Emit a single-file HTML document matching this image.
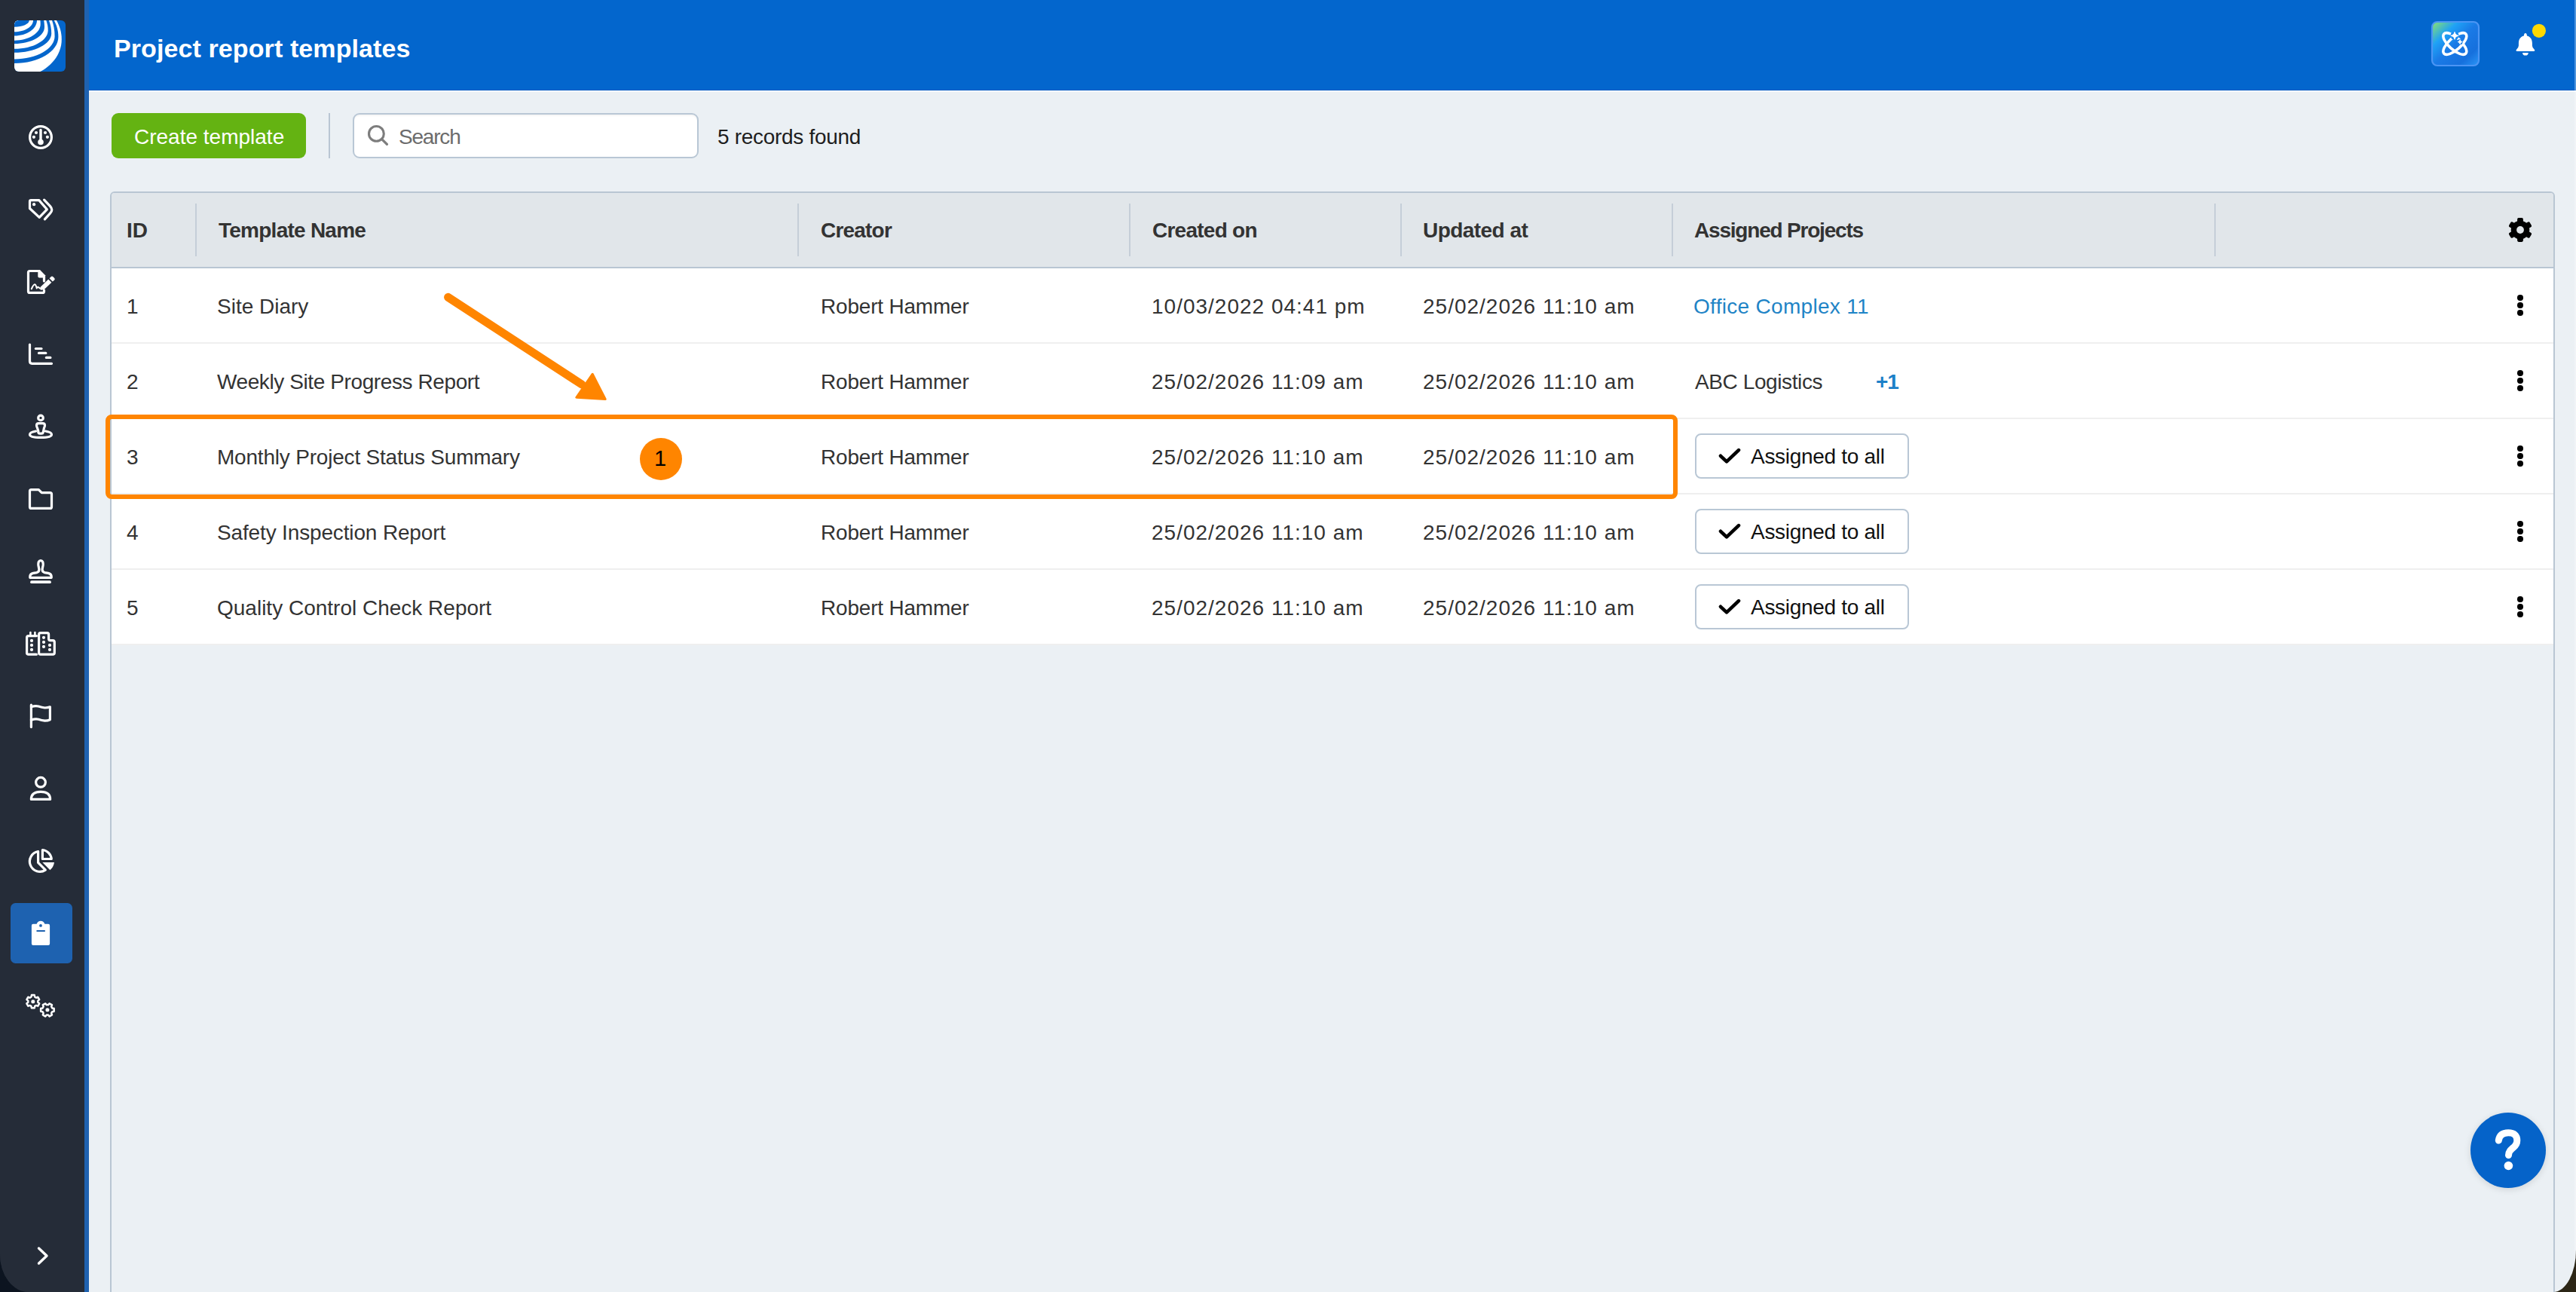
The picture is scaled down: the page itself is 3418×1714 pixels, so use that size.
<!DOCTYPE html>
<html><head><meta charset="utf-8">
<style>
*{box-sizing:border-box;margin:0;padding:0}
html,body{width:3418px;height:1714px;overflow:hidden;background:linear-gradient(90deg,#0c1420 0%,#1a1c1c 50%,#2c2616 100%)}
body{font-family:"Liberation Sans",sans-serif;position:relative}
.win{position:absolute;left:0;top:0;width:3418px;height:1714px;background:linear-gradient(90deg,#252c38 0,#252c38 112px,#ebf0f4 112px);border-radius:0 0 30px 38px / 0 0 56px 50px;overflow:hidden}
.abs{position:absolute;white-space:nowrap}
.side{position:absolute;left:0;top:0;width:112px;height:1714px;background:#252c38}
.strip{position:absolute;left:112px;top:0;width:6px;height:1714px;background:#1f62b0}
.hdr{position:absolute;left:118px;top:0;width:3300px;height:120px;background:#0366cd}
.title{position:absolute;left:151px;top:39px;font-size:34px;font-weight:700;color:#fff;line-height:50px;white-space:nowrap;letter-spacing:0.1px}
.btn{position:absolute;left:148px;top:150px;width:258px;height:60px;background:#64b312;border-radius:9px}
.vdiv{position:absolute;left:436px;top:150px;width:2px;height:60px;background:#b9c6d3}
.search{position:absolute;left:468px;top:150px;width:459px;height:60px;background:#fff;border:2px solid #b9c7d5;border-radius:9px;box-shadow:inset 0 2px 2px rgba(0,0,0,0.04)}
.table{position:absolute;left:146px;top:254px;width:3244px;height:1600px;border:2px solid #b9c6d3;border-radius:6px;background:#ebf0f4}
.thead{position:absolute;left:148px;top:256px;width:3240px;height:100px;background:#e1e6ea;border-bottom:2px solid #b9c6d3;border-radius:4px 4px 0 0}
.row{position:absolute;left:148px;width:3240px;height:100px;background:#fff;border-bottom:2px solid #efefef}
.t{position:absolute;font-size:28px;color:#333;line-height:40px;white-space:nowrap}
.th{position:absolute;font-size:28px;font-weight:700;color:#333;line-height:40px;white-space:nowrap}
.cdiv{position:absolute;top:270px;width:2px;height:70px;background:#c5ced8}
.dt{letter-spacing:1px}
.abtn{position:absolute;left:2249px;width:284px;height:60px;background:#fff;border:2px solid #b9c7d5;border-radius:8px}
.abtn svg{position:absolute;left:29px;top:17px}
.abtn span{position:absolute;left:72px;top:9px;font-size:28px;line-height:40px;color:#111;white-space:nowrap}
.keb{position:absolute;left:3340.3px;width:8px;height:28px}
.keb i{display:block;width:7.4px;height:7.4px;border-radius:50%;background:#000;margin-bottom:2.6px}
</style></head><body>
<div class="win">
<div class="side"></div><div class="strip"></div><div class="hdr"></div>
<svg class="abs" style="left:0;top:0" width="118" height="1714" viewBox="0 0 118 1714"><defs><clipPath id="lc"><rect x="19" y="27" width="68" height="68" rx="6"/></clipPath></defs><g clip-path="url(#lc)"><rect x="19" y="27" width="68" height="68" fill="#0466cc"/><path d="M19.00 27.00 L75.00 27.00 C79.08 34.59 81.80 42.18 81.80 52.30 C81.80 73.65 66.18 88.59 53.40 95.00 L19.00 95.00 Z" fill="#fff"/><path d="M19.00 27.00 L71.80 27.00 C75.16 33.60 77.40 40.20 77.40 49.00 C77.40 68.25 51.12 84.00 19.00 84.00 Z" fill="#0466cc"/><path d="M19.00 27.00 L69.00 27.00 C71.16 33.30 72.60 39.60 72.60 48.00 C72.60 64.72 48.48 78.40 19.00 78.40 Z" fill="#fff"/><path d="M19.00 27.00 L65.00 27.00 C66.92 32.22 68.20 37.44 68.20 44.40 C68.20 58.31 46.06 69.70 19.00 69.70 Z" fill="#0466cc"/><path d="M19.00 27.00 L61.30 27.00 C62.74 30.96 63.70 34.92 63.70 40.20 C63.70 53.73 43.59 64.80 19.00 64.80 Z" fill="#fff"/><path d="M19.00 27.00 L58.20 27.00 C58.68 29.70 59.00 32.40 59.00 36.00 C59.00 48.10 41.00 58.00 19.00 58.00 Z" fill="#0466cc"/><path d="M19.00 27.00 L53.40 27.00 C53.58 28.50 53.70 30.00 53.70 32.00 C53.70 43.94 38.09 53.70 19.00 53.70 Z" fill="#fff"/><path d="M19.00 27.00 L49.00 27.00 C49.00 38.27 35.50 47.50 19.00 47.50 Z" fill="#0466cc"/><path d="M19.00 27.00 L44.00 27.00 C44.00 35.41 32.75 42.30 19.00 42.30 Z" fill="#fff"/><path d="M19.00 27.00 L38.80 27.00 C38.80 31.79 29.89 35.70 19.00 35.70 Z" fill="#0466cc"/></g><circle cx="54" cy="182" r="14.4" stroke="#fff" fill="none" stroke-width="3.2" stroke-linecap="round" stroke-linejoin="round"/><path d="M54 172.5 V186" stroke="#fff" stroke-width="3.4" stroke-linecap="round"/><circle cx="54" cy="188.5" r="3.8" fill="#fff"/><circle cx="48" cy="176" r="2.1" fill="#fff"/><circle cx="60" cy="176" r="2.1" fill="#fff"/><circle cx="44.9" cy="181.8" r="2.1" fill="#fff"/><circle cx="62.9" cy="181.8" r="2.1" fill="#fff"/><path d="M39.5 267.3 Q39.5 265.6 41.2 265.6 H51.8 L62.3 277.8 L52.2 288.4 L39.5 276.5 Z" stroke="#fff" fill="none" stroke-width="3.2" stroke-linecap="round" stroke-linejoin="round"/><circle cx="45.1" cy="271.2" r="2.1" fill="#fff"/><path d="M58.6 265.2 L66.6 273.6 Q68.8 276.2 68.8 278.3 Q68.8 280.6 66.6 282.9 L59.4 290.9" stroke="#fff" fill="none" stroke-width="3.2" stroke-linecap="round" stroke-linejoin="round"/><g transform="translate(28 348)"><path d="M22 11.5 H11.5 Q9.5 11.5 9.5 13.5 V38.4 Q9.5 40.4 11.5 40.4 H28.5 Q30.5 40.4 30.5 38.4 V37" stroke="#fff" fill="none" stroke-width="3.2" stroke-linecap="round" stroke-linejoin="round"/><path d="M22.3 10 H25 L32.1 17.2 V20.4 H24.3 Q22.3 20.4 22.3 18.4 Z" fill="#fff"/><path d="M30.5 20 V25" stroke="#fff" fill="none" stroke-width="3.2" stroke-linecap="round" stroke-linejoin="round"/><path d="M13.8 35.2 Q16.6 29.2 18.1 29.3 Q19.5 29.5 20.8 34.4 Q22 31.9 23.1 33.2 Q24.3 34.8 27.5 34.6" stroke="#fff" fill="none" stroke-width="2.1" stroke-linecap="round" stroke-linejoin="round"/><path d="M26.2 32.2 L36.2 22.6 L40.4 26.8 L30.4 36.2 L25.6 36.8 Z" fill="#fff"/><path d="M37.6 21.2 L39.8 19 Q41 17.8 42.2 19 L44.2 21 Q45.4 22.2 44.2 23.4 L41.8 25.6 Z" fill="#fff"/></g><g transform="translate(30 445)"><path d="M9.5 12 V34.3 Q9.5 37.3 12.5 37.3 H38.5" stroke="#fff" fill="none" stroke-width="3.2" stroke-linecap="round" stroke-linejoin="round"/><path d="M17.4 17.5 H25" stroke="#fff" fill="none" stroke-width="3.2" stroke-linecap="round" stroke-linejoin="round"/><path d="M21.5 23.4 H30.8" stroke="#fff" fill="none" stroke-width="3.2" stroke-linecap="round" stroke-linejoin="round"/><path d="M31.4 29.4 H36.9" stroke="#fff" fill="none" stroke-width="3.2" stroke-linecap="round" stroke-linejoin="round"/></g><g transform="translate(30 542)"><circle cx="24" cy="12.4" r="3.3" stroke="#fff" fill="none" stroke-width="3.2" stroke-linecap="round" stroke-linejoin="round"/><path d="M20.8 29.8 L19.6 26 Q18.5 24 18.5 22.3 Q18.5 19.6 21.3 19.6 H26.7 Q29.5 19.6 29.5 22.3 Q29.5 24 28.4 26 L27.2 31.8 Q26.8 33.2 25.2 33.2 H22.8 Q21.2 33.2 20.8 31.8 Z" stroke="#fff" fill="none" stroke-width="3.2" stroke-linecap="round" stroke-linejoin="round"/><path d="M17.5 30 Q9.5 31.5 9.5 34.4 Q9.5 38.3 24 38.3 Q38.5 38.3 38.5 34.4 Q38.5 31.5 30.5 30" stroke="#fff" fill="none" stroke-width="3.2" stroke-linecap="round" stroke-linejoin="round"/></g><g transform="translate(30 637)"><path d="M9.5 14.6 Q9.5 12.6 11.5 12.6 H21.3 L25.3 16.6 H36.5 Q38.5 16.6 38.5 18.6 V35.4 Q38.5 37.4 36.5 37.4 H11.5 Q9.5 37.4 9.5 35.4 Z" stroke="#fff" fill="none" stroke-width="3.2" stroke-linecap="round" stroke-linejoin="round"/></g><g transform="translate(30 733)"><path d="M9.8 33.3 Q9.3 28.5 14 27.4 L18.6 26.6 Q22.4 25.6 21.8 21.6 L20.9 17 Q20.3 10.6 24 10.6 Q27.7 10.6 27.1 17 L26.2 21.6 Q25.6 25.6 29.4 26.6 L34 27.4 Q38.7 28.5 38.2 33.3 Z" stroke="#fff" fill="none" stroke-width="3.2" stroke-linecap="round" stroke-linejoin="round"/><path d="M12 39.2 H36" stroke="#fff" stroke-width="3.8" stroke-linecap="round"/></g><g transform="translate(29 829)"><path d="M19.4 14.6 H8.8 Q6.6 14.6 6.6 16.8 V37 Q6.6 39.2 8.8 39.2 H19.4" stroke="#fff" fill="none" stroke-width="3.2" stroke-linecap="round" stroke-linejoin="round"/><path d="M11.4 10 V14 M17.4 10 V14" stroke="#fff" stroke-width="2.6" stroke-linecap="round"/><path d="M24.8 10.7 H33.6 Q35.6 10.7 35.6 12.7 V18.5 Q35.6 20.6 37.6 20.6 H41.1 Q43.3 20.6 43.3 22.8 V37 Q43.3 39.2 41.1 39.2 H24.8 Q22.6 39.2 22.6 37 V12.9 Q22.6 10.7 24.8 10.7 Z" stroke="#fff" fill="none" stroke-width="3.2" stroke-linecap="round" stroke-linejoin="round"/><circle cx="13" cy="20.9" r="2.1" fill="#fff"/><circle cx="13" cy="26.9" r="2.1" fill="#fff"/><circle cx="13" cy="32.9" r="2.1" fill="#fff"/><circle cx="29" cy="16.8" r="2.1" fill="#fff"/><circle cx="29" cy="22.9" r="2.1" fill="#fff"/><circle cx="29" cy="28.9" r="2.1" fill="#fff"/><circle cx="37" cy="26.9" r="2.1" fill="#fff"/><circle cx="37" cy="32.9" r="2.1" fill="#fff"/></g><g transform="translate(30 925)"><path d="M11.4 10.2 V39.6" stroke="#fff" fill="none" stroke-width="3.2" stroke-linecap="round" stroke-linejoin="round"/><path d="M11.4 12.8 Q16.5 11 21 12 Q25.5 13.5 29.5 14 Q33.5 14 36.4 12.8 V29.8 Q33.5 31.2 29.5 31.2 Q25.5 30.6 21 29.2 Q16.5 28.2 11.4 30.2" stroke="#fff" fill="none" stroke-width="3.2" stroke-linecap="round" stroke-linejoin="round"/></g><g transform="translate(30 1021)"><circle cx="24" cy="16.8" r="6.4" stroke="#fff" fill="none" stroke-width="3.2" stroke-linecap="round" stroke-linejoin="round"/><path d="M11.4 39.4 Q11.4 29.4 24 29.4 Q36.6 29.4 36.6 39.4 Z" stroke="#fff" fill="none" stroke-width="3.2" stroke-linecap="round" stroke-linejoin="round"/></g><g transform="translate(30 1118)"><path d="M20.6 11.5 V26.4 L30.3 36.1 A13.5 13.5 0 1 1 20.6 11.5 Z" stroke="#fff" fill="none" stroke-width="3.2" stroke-linecap="round" stroke-linejoin="round"/><path d="M26.4 9.5 A13.5 13.5 0 0 1 38.3 21.5 H26.4 Z" stroke="#fff" fill="none" stroke-width="3.2" stroke-linecap="round" stroke-linejoin="round"/><path d="M26.3 26.1 H42 A15.6 15.6 0 0 1 36.4 36.2 Z" fill="#fff"/></g><rect x="14" y="1198" width="82" height="80" rx="6.5" fill="#1e62b0"/><path d="M44 1225.8 H48.6 Q50.2 1221.7 54 1221.7 Q57.8 1221.7 59.4 1225.8 H64 Q66.1 1225.8 66.1 1228 V1251.7 Q66.1 1254 64 1254 H44 Q41.9 1254 41.9 1251.7 V1228 Q41.9 1225.8 44 1225.8 Z" fill="#fff"/><circle cx="54" cy="1227.9" r="1.9" fill="#1e62b0"/><rect x="48.5" y="1234" width="11.3" height="2" fill="#1e62b0"/><path d="M41.47 1322.52 L41.88 1320.11 L45.72 1320.11 L46.13 1322.52 L47.99 1323.60 L50.28 1322.74 L52.20 1326.07 L50.31 1327.63 L50.31 1329.77 L52.20 1331.33 L50.28 1334.66 L47.99 1333.80 L46.13 1334.88 L45.72 1337.29 L41.88 1337.29 L41.47 1334.88 L39.61 1333.80 L37.32 1334.66 L35.40 1331.33 L37.29 1329.77 L37.29 1327.63 L35.40 1326.07 L37.32 1322.74 L39.61 1323.60 Z" stroke="#fff" fill="none" stroke-width="2.5" stroke-linejoin="round"/><circle cx="43.8" cy="1328.7" r="2.5" fill="#fff"/><path d="M64.01 1333.09 L65.59 1331.21 L68.99 1333.18 L68.16 1335.49 L69.26 1337.40 L71.68 1337.84 L71.68 1341.76 L69.26 1342.20 L68.16 1344.11 L68.99 1346.42 L65.59 1348.39 L64.01 1346.51 L61.79 1346.51 L60.21 1348.39 L56.81 1346.42 L57.64 1344.11 L56.54 1342.20 L54.12 1341.76 L54.12 1337.84 L56.54 1337.40 L57.64 1335.49 L56.81 1333.18 L60.21 1331.21 L61.79 1333.09 Z" stroke="#fff" fill="none" stroke-width="2.5" stroke-linejoin="round"/><circle cx="62.9" cy="1339.8" r="2.5" fill="#fff"/><path d="M51.5 1656 L62 1666 L51.5 1676" stroke="#fff" fill="none" stroke-width="3.4" stroke-linecap="round" stroke-linejoin="round"/></svg>
<div class="title">Project report templates</div>
<div class="abs" style="left:118px;top:119px;width:3300px;height:1px;background:#0259c2"></div><div class="abs" style="left:118px;top:120px;width:3300px;height:1.5px;background:#f8fafc"></div><div class="abs" style="left:3416px;top:0;width:2px;height:1714px;background:rgba(255,255,255,0.3)"></div>
<svg class="abs" style="left:3224px;top:26px" width="68" height="64" viewBox="0 0 68 64">
<defs><linearGradient id="ag" x1="0" y1="0" x2="1" y2="1">
<stop offset="0" stop-color="#8fe46a"/><stop offset="0.28" stop-color="#1fa2f6"/><stop offset="0.5" stop-color="#1a7ae6"/><stop offset="0.78" stop-color="#1670dd"/><stop offset="1" stop-color="#2a96f7"/></linearGradient></defs>
<rect x="3" y="3" width="62" height="58" rx="7" fill="url(#ag)" stroke="#4c95f4" stroke-width="2.2"/>
<g fill="none" stroke="#fff" stroke-width="3.6">
<ellipse cx="33.3" cy="32" rx="19.5" ry="8" transform="rotate(42 33.3 32)"/>
<ellipse cx="33.3" cy="32" rx="19.5" ry="8" transform="rotate(-42 33.3 32)"/>
</g>
<circle cx="33" cy="21.3" r="5.6" fill="#1b8cf0"/><circle cx="40.1" cy="29.6" r="3.6" fill="#1a7ee8"/>
<path d="M33 16.6 Q33.4 20.6 37.6 21.3 Q33.4 22 33 26 Q32.6 22 28.4 21.3 Q32.6 20.6 33 16.6 Z" fill="#fff" stroke="#fff" stroke-width="1.2" stroke-linejoin="round"/>
<path d="M40.1 26.8 Q40.4 29.3 42.9 29.6 Q40.4 29.9 40.1 32.4 Q39.8 29.9 37.3 29.6 Q39.8 29.3 40.1 26.8 Z" fill="#fff" stroke="#fff" stroke-width="1" stroke-linejoin="round"/>
</svg>
<svg class="abs" style="left:3325px;top:30px" width="60" height="50" viewBox="0 0 60 50">
<path d="M25.9 17.2 C31.6 17.2 34.9 21.6 34.9 27.2 L34.9 30.6 Q35.1 33.8 37.6 35.6 Q39.3 37.6 37.2 38 H14.6 Q12.5 37.6 14.2 35.6 Q16.7 33.8 16.9 30.6 L16.9 27.2 C16.9 21.6 20.2 17.2 25.9 17.2 Z" fill="#fff"/>
<path d="M23.8 18.4 Q23.9 14.1 25.9 14.1 Q27.9 14.1 28 18.4 Z" fill="#fff"/>
<path d="M22 39.9 H29.8 Q29.6 43.5 25.9 43.5 Q22.2 43.5 22 39.9 Z" fill="#fff"/>
<circle cx="43.9" cy="10.8" r="9.1" fill="#ffd800"/>
</svg>
<div class="btn"></div>
<div class="abs" style="left:178px;top:162px;font-size:28px;line-height:40px;color:#fff;letter-spacing:0px">Create template</div>
<div class="vdiv"></div><div class="search"></div>
<svg class="abs" style="left:484px;top:162px" width="36" height="36" viewBox="0 0 36 36"><circle cx="15.4" cy="15.4" r="9.9" fill="none" stroke="#7d7d7d" stroke-width="3.1"/><path d="M22.6 22.6 L29.4 29.4" stroke="#7d7d7d" stroke-width="3.3" stroke-linecap="round"/></svg>
<div class="abs" style="left:529px;top:162px;font-size:28px;line-height:40px;color:#6c6c6c;letter-spacing:-1.2px">Search</div>
<div class="abs" style="left:952px;top:162px;font-size:28px;line-height:40px;color:#1e1e1e;letter-spacing:-0.3px">5 records found</div>
<div class="table"></div><div class="thead"></div>
<div class="cdiv" style="left:259px"></div>
<div class="cdiv" style="left:1058px"></div>
<div class="cdiv" style="left:1498px"></div>
<div class="cdiv" style="left:1858px"></div>
<div class="cdiv" style="left:2218px"></div>
<div class="cdiv" style="left:2938px"></div>
<div class="th" style="left:168px;top:286px;letter-spacing:0px">ID</div>
<div class="th" style="left:290px;top:286px;letter-spacing:-0.75px">Template Name</div>
<div class="th" style="left:1089px;top:286px;letter-spacing:-0.8px">Creator</div>
<div class="th" style="left:1529px;top:286px;letter-spacing:-0.75px">Created on</div>
<div class="th" style="left:1888px;top:286px;letter-spacing:-0.55px">Updated at</div>
<div class="th" style="left:2248px;top:286px;letter-spacing:-1.2px">Assigned Projects</div>
<svg class="abs" style="left:3324px;top:285px" width="40" height="40" viewBox="0 0 40 40"><g transform="translate(20 20)"><circle r="12.3" fill="#000"/><rect x="-3.9" y="-15.9" width="7.8" height="8" rx="1.8" fill="#000" transform="rotate(0)"/><rect x="-3.9" y="-15.9" width="7.8" height="8" rx="1.8" fill="#000" transform="rotate(60)"/><rect x="-3.9" y="-15.9" width="7.8" height="8" rx="1.8" fill="#000" transform="rotate(120)"/><rect x="-3.9" y="-15.9" width="7.8" height="8" rx="1.8" fill="#000" transform="rotate(180)"/><rect x="-3.9" y="-15.9" width="7.8" height="8" rx="1.8" fill="#000" transform="rotate(240)"/><rect x="-3.9" y="-15.9" width="7.8" height="8" rx="1.8" fill="#000" transform="rotate(300)"/><circle r="4.9" fill="#e1e6ea"/></g></svg>
<div class="row" style="top:356px"></div>
<div class="t" style="left:168px;top:387px">1</div>
<div class="t" style="left:288px;top:387px;">Site Diary</div>
<div class="t" style="left:1089px;top:387px;letter-spacing:-0.2px">Robert Hammer</div>
<div class="t dt" style="left:1528px;top:387px">10/03/2022 04:41 pm</div>
<div class="t dt" style="left:1888px;top:387px">25/02/2026 11:10 am</div>
<div class="t" style="left:2247px;top:387px;color:#1f84c6;letter-spacing:0.3px">Office Complex 11</div>
<div class="keb" style="top:391.3px"><i></i><i></i><i></i></div>
<div class="row" style="top:456px"></div>
<div class="t" style="left:168px;top:487px">2</div>
<div class="t" style="left:288px;top:487px;letter-spacing:-0.4px">Weekly Site Progress Report</div>
<div class="t" style="left:1089px;top:487px;letter-spacing:-0.2px">Robert Hammer</div>
<div class="t dt" style="left:1528px;top:487px">25/02/2026 11:09 am</div>
<div class="t dt" style="left:1888px;top:487px">25/02/2026 11:10 am</div>
<div class="t" style="left:2249px;top:487px;letter-spacing:-0.4px">ABC Logistics</div>
<div class="t" style="left:2489px;top:487px;color:#1c80c8;font-weight:700;letter-spacing:-1px">+1</div>
<div class="keb" style="top:491.3px"><i></i><i></i><i></i></div>
<div class="row" style="top:556px"></div>
<div class="t" style="left:168px;top:587px">3</div>
<div class="t" style="left:288px;top:587px;letter-spacing:-0.2px">Monthly Project Status Summary</div>
<div class="t" style="left:1089px;top:587px;letter-spacing:-0.2px">Robert Hammer</div>
<div class="t dt" style="left:1528px;top:587px">25/02/2026 11:10 am</div>
<div class="t dt" style="left:1888px;top:587px">25/02/2026 11:10 am</div>
<div class="abtn" style="top:575px"><svg width="32" height="24" viewBox="0 0 32 24"><path d="M3 10.8 L11 18.4 L27 3.1" fill="none" stroke="#000" stroke-width="4.6" stroke-linecap="round" stroke-linejoin="round"/></svg><span style="letter-spacing:-0.3px">Assigned to all</span></div>
<div class="keb" style="top:591.3px"><i></i><i></i><i></i></div>
<div class="row" style="top:656px"></div>
<div class="t" style="left:168px;top:687px">4</div>
<div class="t" style="left:288px;top:687px;letter-spacing:-0.15px">Safety Inspection Report</div>
<div class="t" style="left:1089px;top:687px;letter-spacing:-0.2px">Robert Hammer</div>
<div class="t dt" style="left:1528px;top:687px">25/02/2026 11:10 am</div>
<div class="t dt" style="left:1888px;top:687px">25/02/2026 11:10 am</div>
<div class="abtn" style="top:675px"><svg width="32" height="24" viewBox="0 0 32 24"><path d="M3 10.8 L11 18.4 L27 3.1" fill="none" stroke="#000" stroke-width="4.6" stroke-linecap="round" stroke-linejoin="round"/></svg><span style="letter-spacing:-0.3px">Assigned to all</span></div>
<div class="keb" style="top:691.3px"><i></i><i></i><i></i></div>
<div class="row" style="top:756px"></div>
<div class="t" style="left:168px;top:787px">5</div>
<div class="t" style="left:288px;top:787px;">Quality Control Check Report</div>
<div class="t" style="left:1089px;top:787px;letter-spacing:-0.2px">Robert Hammer</div>
<div class="t dt" style="left:1528px;top:787px">25/02/2026 11:10 am</div>
<div class="t dt" style="left:1888px;top:787px">25/02/2026 11:10 am</div>
<div class="abtn" style="top:775px"><svg width="32" height="24" viewBox="0 0 32 24"><path d="M3 10.8 L11 18.4 L27 3.1" fill="none" stroke="#000" stroke-width="4.6" stroke-linecap="round" stroke-linejoin="round"/></svg><span style="letter-spacing:-0.3px">Assigned to all</span></div>
<div class="keb" style="top:791.3px"><i></i><i></i><i></i></div>
<svg class="abs" style="left:0;top:0" width="3418" height="1714" viewBox="0 0 3418 1714">
<rect x="143" y="553" width="2080" height="106" rx="5" fill="none" stroke="#ff8500" stroke-width="6"/>
<path d="M594.6 394.3 L772 510" stroke="#ff8500" stroke-width="11" stroke-linecap="round"/>
<path d="M785 495.2 Q786.5 494 787.5 495.6 L804.6 529 Q805 531.2 803 531 L765 528.8 Q762.5 528.4 763.6 526.4 Z" fill="#ff8500"/>
<circle cx="877" cy="609" r="28" fill="#ff8500"/>
</svg>
<div class="abs" style="left:868px;top:588px;font-size:29px;line-height:40px;color:#000">1</div>
<div class="abs" style="left:3278px;top:1476px;width:100px;height:100px;border-radius:50%;background:#0563c9;box-shadow:0 2px 10px rgba(0,0,0,0.12)"></div>
<svg class="abs" style="left:3298px;top:1490px" width="60" height="72" viewBox="0 0 60 72"><path d="M17.3 23 Q18.8 12.8 30.2 12.8 Q41.8 12.8 41.8 23 Q41.8 29 35.5 33.5 Q30.5 37.5 30.5 42.5" fill="none" stroke="#fff" stroke-width="9" stroke-linecap="round"/><circle cx="30.4" cy="56.5" r="5.8" fill="#fff"/></svg>
</div>
</body></html>
